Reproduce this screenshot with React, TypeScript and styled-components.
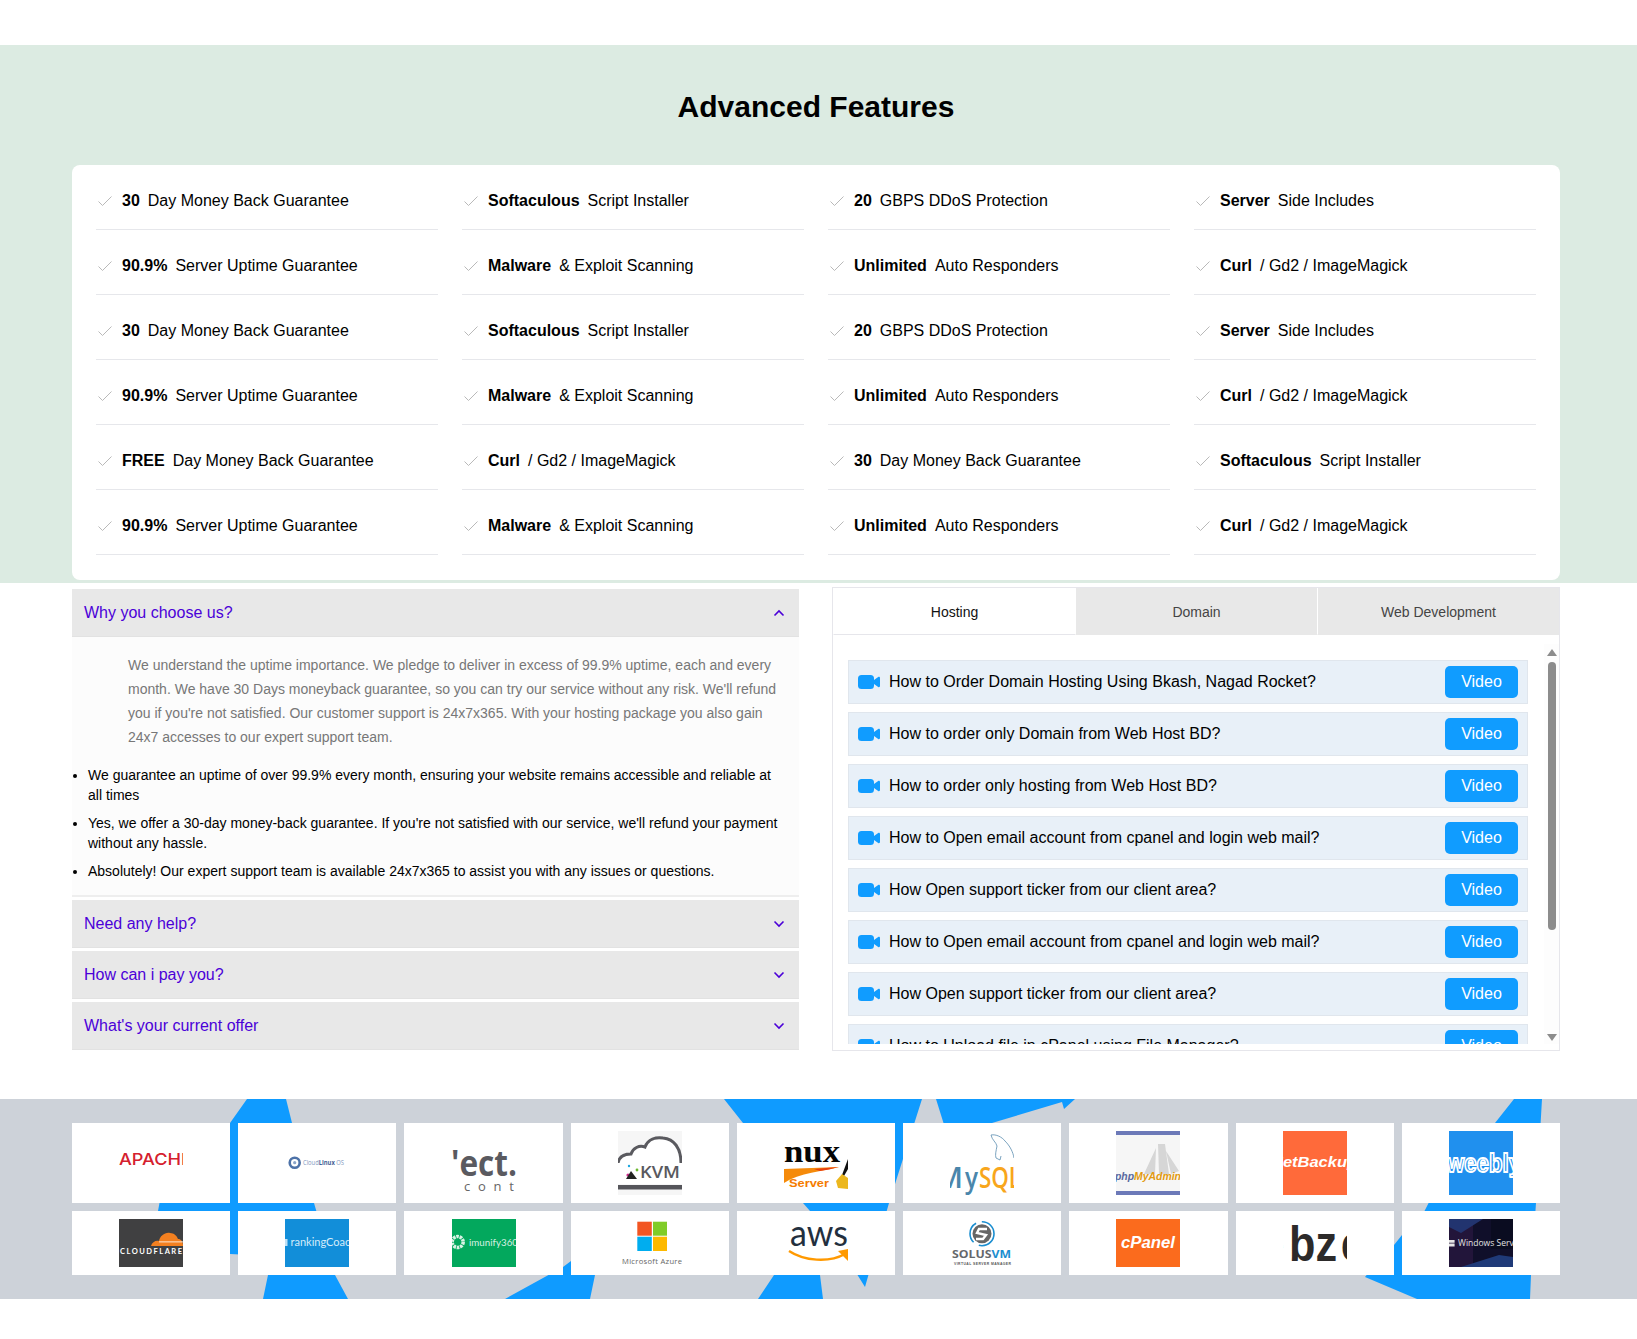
import React, { useState } from 'react';
import styled, { createGlobalStyle } from 'styled-components';

const GlobalStyle = createGlobalStyle`
  * {
    box-sizing: border-box;
  }
  body {
    margin: 0;
    background: #fff;
    font-family: 'Liberation Sans', Arial, sans-serif;
    color: #000;
  }
`;

const features: [string, string][] = [
  ['30', 'Day Money Back Guarantee'],
  ['Softaculous', 'Script Installer'],
  ['20', 'GBPS DDoS Protection'],
  ['Server', 'Side Includes'],
  ['90.9%', 'Server Uptime Guarantee'],
  ['Malware', '& Exploit Scanning'],
  ['Unlimited', 'Auto Responders'],
  ['Curl', '/ Gd2 / ImageMagick'],
  ['30', 'Day Money Back Guarantee'],
  ['Softaculous', 'Script Installer'],
  ['20', 'GBPS DDoS Protection'],
  ['Server', 'Side Includes'],
  ['90.9%', 'Server Uptime Guarantee'],
  ['Malware', '& Exploit Scanning'],
  ['Unlimited', 'Auto Responders'],
  ['Curl', '/ Gd2 / ImageMagick'],
  ['FREE', 'Day Money Back Guarantee'],
  ['Curl', '/ Gd2 / ImageMagick'],
  ['30', 'Day Money Back Guarantee'],
  ['Softaculous', 'Script Installer'],
  ['90.9%', 'Server Uptime Guarantee'],
  ['Malware', '& Exploit Scanning'],
  ['Unlimited', 'Auto Responders'],
  ['Curl', '/ Gd2 / ImageMagick'],
];

const videos = [
  'How to Order Domain Hosting Using Bkash, Nagad Rocket?',
  'How to order only Domain from Web Host BD?',
  'How to order only hosting from Web Host BD?',
  'How to Open email account from cpanel and login web mail?',
  'How Open support ticker from our client area?',
  'How to Open email account from cpanel and login web mail?',
  'How Open support ticker from our client area?',
  'How to Upload file in cPanel using File Manager?',
];

const Page = styled.div`
  padding-top: 45px;
  padding-bottom: 40px;
`;

const FeatureSection = styled.section`
  background: #dcebe2;
  padding: 43px 77px 3px 72px;
`;

const Title = styled.h2`
  margin: 0 0 39px;
  font-size: 30px;
  line-height: 38px;
  font-weight: 700;
  text-align: center;
`;

const FeatureCard = styled.div`
  display: grid;
  grid-template-columns: repeat(4, 1fr);
  column-gap: 24px;
  background: #fff;
  border-radius: 8px;
  padding: 0 24px 25px;
`;

const FeatureRow = styled.div`
  display: flex;
  align-items: center;
  height: 65px;
  padding: 8px 0 0 2px;
  border-bottom: 1px solid #e6e7eb;
  font-size: 16px;
`;

const Check = styled.svg`
  width: 14px;
  height: 10px;
  margin-right: 10px;
  flex: none;
  fill: none;
  stroke: #b9b9b9;
  stroke-width: 1;
`;

const FeatureStrong = styled.strong`
  margin-right: 8px;
`;

const HelpRow = styled.section`
  display: grid;
  grid-template-columns: 727px 1fr;
  column-gap: 33px;
  padding: 4px 77px 0 72px;
`;

const Accordion = styled.div`
  padding-top: 2px;
`;

const AccordionItem = styled.div`
  margin-bottom: 3px;

  &:last-child {
    margin-bottom: 0;
  }
`;

const AccordionHead = styled.button`
  display: flex;
  align-items: center;
  justify-content: space-between;
  width: 100%;
  height: 48px;
  padding: 0 14px 0 12px;
  border: 0;
  border-bottom: 1px solid #e2e2e2;
  background: #e8e8e8;
  color: #4b00d8;
  font-family: inherit;
  font-size: 16px;
  text-align: left;
  cursor: pointer;
`;

const Chevron = styled.svg`
  width: 12px;
  height: 8px;
  fill: none;
  stroke: #4b00d8;
  stroke-width: 1.6;
`;

const AccordionBody = styled.div`
  background: #fcfcfc;
  border-bottom: 2px solid #eeeeee;
  padding: 16px 15px 14px 0;
`;

const Lead = styled.p`
  margin: 0 0 16px;
  padding-left: 56px;
  font-size: 14px;
  line-height: 24px;
  color: #777;
`;

const Points = styled.ul`
  margin: 0;
  padding-left: 16px;
  font-size: 14px;
  line-height: 20px;

  li {
    margin-bottom: 8px;
  }

  li:last-child {
    margin-bottom: 0;
  }
`;

const TabPanel = styled.div`
  border: 1px solid #e6e6eb;
  background: #fff;
`;

const TabBar = styled.div`
  display: grid;
  grid-template-columns: repeat(3, 1fr);
`;

const Tab = styled.button<{ $active?: boolean }>`
  height: 47px;
  padding: 2px 0 0;
  border: 0;
  border-left: 1px solid #fff;
  border-bottom: 1px solid ${(p) => (p.$active ? '#e6e6eb' : '#e8e8e8')};
  background: ${(p) => (p.$active ? '#fff' : '#e8e8e8')};
  color: ${(p) => (p.$active ? '#111' : '#444')};
  font-family: inherit;
  font-size: 14px;
  cursor: pointer;
`;

const TabBody = styled.div`
  display: flex;
  height: 400px;
  margin: 9px 0 6px;
`;

const VideoList = styled.div`
  flex: 1;
  min-width: 0;
  overflow: hidden;
  display: flex;
  flex-direction: column;
  gap: 8px;
  padding: 16px 16px 0 15px;
`;

const VideoRow = styled.div`
  display: flex;
  align-items: center;
  flex: none;
  height: 44px;
  padding: 0 9px 0 9px;
  background: #e8f0f8;
  border: 1px solid #e0e6ed;
  font-size: 16px;
`;

const VideoGlyph = styled.svg`
  width: 22px;
  height: 14px;
  margin-right: 9px;
  fill: #109cff;
  flex: none;
`;

const VideoTitle = styled.span`
  flex: 1;
`;

const VideoButton = styled.button`
  width: 73px;
  height: 32px;
  border: 0;
  border-radius: 5px;
  background: #109cff;
  color: #fff;
  font-family: inherit;
  font-size: 16px;
  cursor: pointer;
`;

const ScrollTrack = styled.div`
  width: 15px;
  flex: none;
  display: flex;
  flex-direction: column;
  align-items: center;
  padding: 5px 0 3px;
  background: #fdfdfd;
`;

const ArrowUp = styled.div`
  width: 0;
  height: 0;
  border-left: 5px solid transparent;
  border-right: 5px solid transparent;
  border-bottom: 7px solid #8c8c8c;
`;

const ArrowDown = styled(ArrowUp)`
  border-bottom: 0;
  border-top: 7px solid #8c8c8c;
  margin-top: auto;
`;

const ScrollThumb = styled.div`
  width: 8px;
  height: 268px;
  margin-top: 6px;
  border-radius: 4px;
  background: #8c8c8c;
`;

const LogoSection = styled.section`
  position: relative;
  margin-top: 48px;
  height: 200px;
  background: #cdd2d9;
  padding: 24px 77px 24px 72px;
  overflow: hidden;
`;

const Shards = styled.svg`
  position: absolute;
  left: 0;
  top: 0;
  width: 1637px;
  height: 200px;
  fill: #0f9bff;
`;

const LogoGrid = styled.div`
  position: relative;
  display: grid;
  grid-template-columns: repeat(9, 1fr);
  gap: 8px;
`;

const LogoCard = styled.div`
  display: flex;
  align-items: center;
  justify-content: center;
  padding: 8px;
  background: #fff;
`;

const LogoArt = styled.svg`
  display: block;
  width: 64px;
  font-family: 'Liberation Sans', Arial, sans-serif;
`;

const Tall = ({ children }: { children: React.ReactNode }) => (
  <LogoArt viewBox="0 0 64 64" height={64}>{children}</LogoArt>
);

const Short = ({ children }: { children: React.ReactNode }) => (
  <LogoArt viewBox="0 0 64 48" height={48}>{children}</LogoArt>
);

const tallLogos: React.ReactNode[] = [
  <Tall key="apachi">
    <text x="0" y="34" fontFamily="Inter" fontSize="16.5" fontWeight="500" fill="#d5202e" textLength="67" lengthAdjust="spacingAndGlyphs">APACHI</text>
  </Tall>,
  <Tall key="cloudlinux">
    <circle cx="9.7" cy="31.7" r="5" fill="none" stroke="#4d72a8" strokeWidth="2.6" />
    <circle cx="9.7" cy="31.7" r="1.6" fill="#8ba5c9" />
    <text x="18" y="34" fontFamily="Open Sans" fontSize="6.2" fill="#7f97bd" textLength="41" lengthAdjust="spacingAndGlyphs">
      Cloud<tspan fontWeight="700" fill="#3f5f95">Linux</tspan> OS
    </text>
  </Tall>,
  <Tall key="rect">
    <text x="-1" y="44.5" fontFamily="Open Sans" fontSize="35" fontWeight="700" fill="#5a5a60" textLength="66" lengthAdjust="spacingAndGlyphs">'ect.</text>
    <text x="12" y="60" fontFamily="Open Sans" fontSize="13" fill="#666" textLength="50">cont</text>
  </Tall>,
  <Tall key="kvm">
    <rect width="64" height="64" fill="#f6f6f6" />
    <path d="M0 32 C1 26 6 23 13 23 C15 17 21 14 27 16 C30 8 38 6 45 7 C56 8 63 17 63 32" fill="#fff" stroke="#5a5a5f" strokeWidth="3" />
    <rect y="32" width="64" height="21" fill="#fff" />
    <rect y="54" width="64" height="4.5" fill="#55555a" />
    <text x="22" y="47" fontFamily="Open Sans" fontSize="17" fontWeight="600" fill="#59595e" textLength="40" lengthAdjust="spacingAndGlyphs">KVM</text>
    <circle cx="11" cy="35" r="1.2" fill="#1ca7e0" />
    <circle cx="19" cy="39" r="1.4" fill="#6ab82e" />
    <circle cx="10" cy="44" r="1.6" fill="#d02b8c" />
    <path d="M8 48 L13 40 L19 48 Z" fill="#222" />
  </Tall>,
  <Tall key="linux">
    <text x="0" y="31" fontFamily="Liberation Serif" fontSize="32" fontWeight="700" fill="#050505" textLength="56" lengthAdjust="spacingAndGlyphs">nux</text>
    <path d="M0 38 L55 36 C40 40 15 42 0 52 Z" fill="#f58a0a" />
    <path d="M30 38 L55 36 C48 38 42 39 36 40 Z" fill="#e8400f" />
    <text x="5" y="56" fontSize="11.5" fontWeight="700" fill="#f57c00" textLength="40" lengthAdjust="spacingAndGlyphs">Server</text>
    <path d="M58 44 L64 28 L64 38 L60 45 Z" fill="#111" />
    <path d="M52 50 L58 43 L64 47 L64 58 L54 57 Z" fill="#ecb71e" />
  </Tall>,
  <Tall key="mysql">
    <g fill="none" stroke="#5b8db0" strokeWidth="0.8">
      <path d="M41 4 C46 3 52 6 55 10 C60 15 63 21 64 27" />
      <path d="M41 4 C42 9 46 11 47 15 C46 20 45 24 46 27 L50 29 L51 25" />
    </g>
    <text x="-14" y="57" fontFamily="Open Sans" fontSize="28" fontWeight="600" fill="#4a86ab" textLength="27" lengthAdjust="spacingAndGlyphs">M</text>
    <text x="15" y="57" fontFamily="Open Sans" fontSize="28" fontWeight="600" fill="#4a86ab" textLength="13" lengthAdjust="spacingAndGlyphs">y</text>
    <text x="29" y="57" fontFamily="Open Sans" fontSize="28" fontWeight="600" fill="#f8a61c" textLength="42" lengthAdjust="spacingAndGlyphs">SQL</text>
  </Tall>,
  <Tall key="pma">
    <rect width="64" height="64" fill="#f6f6f6" />
    <rect width="64" height="4" fill="#6c79b8" />
    <rect y="60" width="64" height="4" fill="#6c79b8" />
    <path d="M28 43 L40 17 L39 43 Z M42 13 L49 13 L53 43 L43 43 Z M50 20 L63 40 L55 43 Z" fill="#d6d6d6" />
    <text x="-1" y="49" fontSize="10.5" fontWeight="700" fontStyle="italic" fill="#5a6aa0" textLength="66" lengthAdjust="spacingAndGlyphs">
      php<tspan fill="#e29a10">MyAdmin</tspan>
    </text>
  </Tall>,
  <Tall key="netbackup">
    <rect width="64" height="64" fill="#ff6a3a" />
    <text x="-12" y="36" fontSize="15.5" fontWeight="700" fontStyle="italic" fill="#fff" textLength="86" lengthAdjust="spacingAndGlyphs">NetBackup</text>
  </Tall>,
  <Tall key="weebly">
    <rect width="64" height="64" fill="#2090ee" />
    <text x="-2" y="41" fontSize="25" fontWeight="700" fill="#2090ee" stroke="#fff" strokeWidth="1.8" textLength="74" lengthAdjust="spacingAndGlyphs">weebly</text>
  </Tall>,
];

const shortLogos: React.ReactNode[] = [
  <Short key="cloudflare">
    <rect width="64" height="48" fill="#404041" />
    <path d="M32 27 C33 23 37 21 40 22 C41 17 46 13 51 14 C55 14 58 17 59 20 C62 20 64 22 64 27 Z" fill="#f38020" />
    <rect x="40" y="22.5" width="24" height="0.8" fill="#fff" />
    <text x="1" y="35" fontFamily="Lato" fontSize="7.5" fontWeight="700" fill="#fff" textLength="62">CLOUDFLARE</text>
  </Short>,
  <Short key="ranking">
    <rect width="64" height="48" fill="#128ed9" />
    <rect x="0" y="20" width="2.5" height="7" fill="#bfe0f5" />
    <text x="5.5" y="27" fontFamily="Lato" fontSize="11" fill="#d5ecfa" textLength="66" lengthAdjust="spacingAndGlyphs">rankingCoach</text>
  </Short>,
  <Short key="imunify">
    <rect width="64" height="48" fill="#03a85d" />
    <circle cx="5.7" cy="23" r="5.5" fill="none" stroke="#d8f2e4" strokeWidth="3.5" strokeDasharray="2.6 0.8" />
    <text x="17" y="27" fontFamily="Lato" fontSize="9.5" fill="#d6f0e2" textLength="49" lengthAdjust="spacingAndGlyphs">imunify360</text>
  </Short>,
  <Short key="azure">
    <rect x="19.3" y="2.7" width="14.5" height="14" fill="#f25522" />
    <rect x="35" y="2.7" width="14" height="14" fill="#80cc28" />
    <rect x="19.3" y="17.7" width="14.5" height="14.3" fill="#00adef" />
    <rect x="35" y="17.7" width="14" height="14.3" fill="#fdb900" />
    <text x="4" y="44.5" fontFamily="Open Sans" fontSize="7.6" fill="#666" textLength="60">Microsoft Azure</text>
  </Short>,
  <Short key="aws">
    <text x="6" y="27" fontFamily="Lato" fontSize="36" fill="#232f3e" textLength="58" lengthAdjust="spacingAndGlyphs">aws</text>
    <path d="M5 32 C20 42 45 44 61 35" fill="none" stroke="#f90" strokeWidth="2.4" />
    <path d="M54 32 L64 30 L64 42 Z" fill="#f90" />
  </Short>,
  <Short key="solus">
    <circle cx="32" cy="14.7" r="12" fill="none" stroke="#1b8ed0" strokeWidth="1.6" strokeDasharray="22 6" />
    <circle cx="32" cy="14.7" r="9.5" fill="#666" />
    <path d="M37 10 L29 10 L27 14 L36 16 L33 20 L26 20" fill="none" stroke="#fff" strokeWidth="2.4" />
    <text x="2" y="39.3" fontFamily="Open Sans" fontSize="10.5" fontWeight="700" fill="#65676b" textLength="59" lengthAdjust="spacingAndGlyphs">
      SOLUS<tspan fill="#1b8ed0">VM</tspan>
    </text>
    <text x="4" y="46" fontSize="3.4" fontWeight="700" fill="#555" textLength="57">VIRTUAL SERVER MANAGER</text>
  </Short>,
  <Short key="cpanel">
    <rect width="64" height="48" fill="#fb6b1d" />
    <text x="5" y="29" fontSize="17" fontWeight="700" fontStyle="italic" fill="#fff" textLength="54" lengthAdjust="spacingAndGlyphs">cPanel</text>
  </Short>,
  <Short key="ebz">
    <text x="-22" y="42" fontSize="50" fontWeight="700" fill="#2c2a2a" textLength="23" lengthAdjust="spacingAndGlyphs">e</text>
    <text x="6" y="42" fontSize="50" fontWeight="700" fill="#2c2a2a" textLength="48" lengthAdjust="spacingAndGlyphs">bz</text>
    <text x="58" y="42" fontSize="50" fontWeight="700" fill="#2c2a2a" textLength="22" lengthAdjust="spacingAndGlyphs">c</text>
  </Short>,
  <Short key="windows">
    <rect width="64" height="48" fill="#100f2a" />
    <rect width="24" height="48" fill="#27173f" opacity="0.8" />
    <path d="M0 0 H34 L12 14 L0 8 Z" fill="#22346f" />
    <path d="M12 48 L50 36 L64 38 V48 Z" fill="#1f3a78" />
    <rect x="42" width="22" height="30" fill="#0a0c20" />
    <path d="M0 21 H5.6 V23.7 H0 Z M0 24.4 H5.6 V27.4 H0 Z" fill="#e6e6e6" />
    <text x="9" y="27" fontFamily="Open Sans" fontSize="8.5" fill="#e2e2e2" textLength="64" lengthAdjust="spacingAndGlyphs">Windows Server</text>
  </Short>,
];

export default function App() {
  const [activeTab, setActiveTab] = useState('Hosting');

  return (
    <Page>
      <GlobalStyle />
      <FeatureSection>
        <Title>Advanced Features</Title>
        <FeatureCard>
          {features.map(([strong, rest], i) => (
            <FeatureRow key={i}>
              <Check viewBox="0 0 14 10">
                <path d="M0.5 5.5 L4.5 9.5 L13.5 0.5" />
              </Check>
              <FeatureStrong>{strong}</FeatureStrong>
              <span>{rest}</span>
            </FeatureRow>
          ))}
        </FeatureCard>
      </FeatureSection>

      <HelpRow>
        <Accordion>
          <AccordionItem>
            <AccordionHead>
              Why you choose us?
              <Chevron viewBox="0 0 12 8">
                <path d="M1.5 6.5 L6 2 L10.5 6.5" />
              </Chevron>
            </AccordionHead>
            <AccordionBody>
              <Lead>
                We understand the uptime importance. We pledge to deliver in excess of 99.9% uptime, each and every
                month. We have 30 Days moneyback guarantee, so you can try our service without any risk. We'll refund
                you if you're not satisfied. Our customer support is 24x7x365. With your hosting package you also gain
                24x7 accesses to our expert support team.
              </Lead>
              <Points>
                <li>We guarantee an uptime of over 99.9% every month, ensuring your website remains accessible and reliable at all times</li>
                <li>Yes, we offer a 30-day money-back guarantee. If you're not satisfied with our service, we'll refund your payment without any hassle.</li>
                <li>Absolutely! Our expert support team is available 24x7x365 to assist you with any issues or questions.</li>
              </Points>
            </AccordionBody>
          </AccordionItem>
          {['Need any help?', 'How can i pay you?', "What's your current offer"].map((q) => (
            <AccordionItem key={q}>
              <AccordionHead>
                {q}
                <Chevron viewBox="0 0 12 8">
                  <path d="M1.5 1.5 L6 6 L10.5 1.5" />
                </Chevron>
              </AccordionHead>
            </AccordionItem>
          ))}
        </Accordion>

        <TabPanel>
          <TabBar>
            {['Hosting', 'Domain', 'Web Development'].map((t) => (
              <Tab key={t} $active={activeTab === t} onClick={() => setActiveTab(t)}>
                {t}
              </Tab>
            ))}
          </TabBar>
          <TabBody>
            <VideoList>
              {videos.map((v, i) => (
                <VideoRow key={i}>
                  <VideoGlyph viewBox="0 0 22 14">
                    <rect width="16" height="14" rx="3.5" />
                    <path d="M16 5 L20.2 2 C21 1.4 22 1.9 22 2.9 V11.1 C22 12.1 21 12.6 20.2 12 L16 9 Z" />
                  </VideoGlyph>
                  <VideoTitle>{v}</VideoTitle>
                  <VideoButton>Video</VideoButton>
                </VideoRow>
              ))}
            </VideoList>
            <ScrollTrack>
              <ArrowUp />
              <ScrollThumb />
              <ArrowDown />
            </ScrollTrack>
          </TabBody>
        </TabPanel>
      </HelpRow>

      <LogoSection>
        <Shards viewBox="0 0 1637 200">
          <polygon points="247,0 286,0 292,24 314,104 335,176 348,200 263,200 268,176 273,157 230,155 158,112 159.5,104 230,24" />
          <polygon points="724,0 922,0 889,104 865,188 857.5,176 840,150 820,176 823,200 758,200 774,176 800,130 810,112 803,104 743,24" />
          <polygon points="936,0 1075,0 1064,10 1062,3 992,24 985,40 950,40 943.5,24" />
          <polygon points="1514,0 1542,0 1536,104 1531,176 1530,200 1417,200 1365,178 1380,160 1394,146 1402,136 1424.5,112 1428.6,104 1495,24" />
          <polygon points="505,200 590,200 595,176 600,150 571,162 563,168" />
        </Shards>
        <LogoGrid>
          {tallLogos.map((logo, i) => (
            <LogoCard key={i}>{logo}</LogoCard>
          ))}
          {shortLogos.map((logo, i) => (
            <LogoCard key={i}>{logo}</LogoCard>
          ))}
        </LogoGrid>
      </LogoSection>
    </Page>
  );
}
